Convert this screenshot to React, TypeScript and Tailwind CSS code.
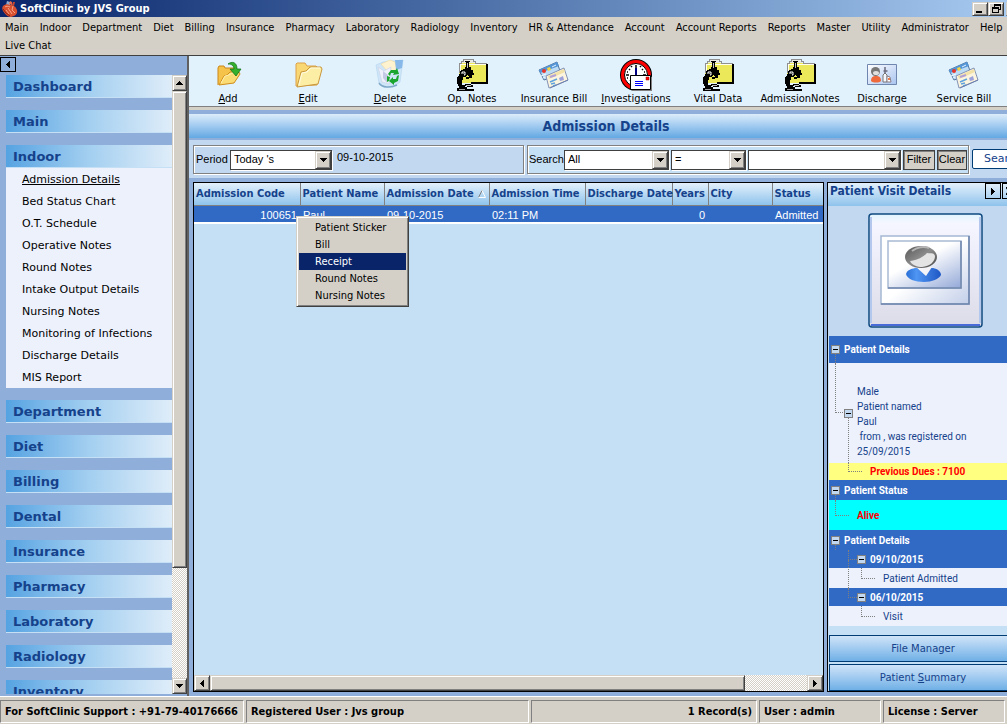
import type { ReactNode } from "react";

const UI = "font-[family-name:'DejaVu_Sans_Condensed','Noto_Sans',sans-serif]";
const WIDE = "font-[family-name:'DejaVu_Sans',Verdana,sans-serif]";
const PLAIN = "font-[family-name:'Liberation_Sans',Arial,sans-serif]";
const NARROW = "font-[family-name:Roboto,'Liberation_Sans',sans-serif]";

const RAISED =
  "bg-[#d4d0c8] border border-t-[#d4d0c8] border-l-[#d4d0c8] border-r-[#404040] border-b-[#404040] shadow-[inset_1px_1px_0_#fff,inset_-1px_-1px_0_#808080]";

const menus = [
  "Main", "Indoor", "Department", "Diet", "Billing", "Insurance", "Pharmacy", "Laboratory", "Radiology",
  "Inventory", "HR & Attendance", "Account", "Account Reports", "Reports", "Master", "Utility",
  "Administrator", "Help", "Live Chat",
];

const indoorLinks = [
  "Admission Details", "Bed Status Chart", "O.T. Schedule", "Operative Notes", "Round Notes",
  "Intake Output Details", "Nursing Notes", "Monitoring of Infections", "Discharge Details", "MIS Report",
];

const sections: { title: string; links?: string[] }[] = [
  { title: "Dashboard" },
  { title: "Main" },
  { title: "Indoor", links: indoorLinks },
  { title: "Department" },
  { title: "Diet" },
  { title: "Billing" },
  { title: "Dental" },
  { title: "Insurance" },
  { title: "Pharmacy" },
  { title: "Laboratory" },
  { title: "Radiology" },
  { title: "Inventory" },
];

function Arrow({ dir }: { dir: "up" | "down" | "left" | "right" }) {
  const d = {
    up: "M0 4h7L3.5 0z",
    down: "M0 0h7L3.5 4z",
    left: "M4 0v7L0 3.5z",
    right: "M0 0v7l4-3.5z",
  }[dir];
  const flat = dir === "up" || dir === "down";
  return (
    <svg width={flat ? 7 : 4} height={flat ? 4 : 7} shapeRendering="crispEdges" aria-hidden="true">
      <path d={d} />
    </svg>
  );
}

function HeartIcon() {
  return (
    <svg width="16" height="16" viewBox="0 0 16 16" aria-hidden="true">
      <path d="M5 0l3 1v3H4z" fill="#8fa8cc" />
      <path d="M7 3l1-3 2 1v3z" fill="#e8694a" />
      <path d="M10 4l1-3h2l-1 4z" fill="#c9452e" />
      <path d="M1 5c2-2 5-2 7-1 4 0 6 2 7 5 1 4-2 6-6 7-3 0-6-3-8-6-1-2-1-4 0-5z" fill="#d8502f" />
      <path d="M3 6c1-1 3-1 5 0M6 7l4 6M11 5l-1 4 3 3M4 9l3 4" stroke="#f6a488" fill="none" />
      <path d="M1 8l3 4 4 3" stroke="#8e1f14" fill="none" />
    </svg>
  );
}

function AddIcon() {
  return (
    <svg width="32" height="32" viewBox="0 0 32 32" className="shrink-0" aria-hidden="true">
      <path d="M6 26V9l1-2h5l1 2h9l1 1v4" fill="#f5c24a" stroke="#c98716" />
      <path d="M7 26l5-9 3-1 3-3h9l1 2-6 9z" fill="#fbdc74" stroke="#cf8d1a" />
      <path d="M9 24l4-7 4-1 3-2h6" fill="none" stroke="#fff0b0" />
      <path d="M16 5c4-3 9-2 9 5h4l-5 7-6-7h4c0-3-2-5-6-5z" fill="#35b02c" stroke="#14741a" strokeWidth=".8" />
    </svg>
  );
}

function EditIcon() {
  return (
    <svg width="32" height="32" viewBox="0 0 32 32" className="shrink-0" aria-hidden="true">
      <path d="M4 27V5l1-1h8l2 3h9l1 1v18z" fill="#f9d873" stroke="#dba04a" />
      <path d="M5 28l4-15 5-1 4-4h11l1 2-4 15z" fill="#fdeea6" stroke="#c9973c" />
      <path d="M7 26l3-12 5-1 4-4h9" fill="none" stroke="#fffbe0" />
    </svg>
  );
}

function DeleteIcon() {
  return (
    <svg width="32" height="32" viewBox="0 0 32 32" className="shrink-0" aria-hidden="true">
      <path d="M2 6l7-3 20-2-3 22-7 5-9 0-5-4z" fill="#cfe6f8" stroke="#b4d4ee" strokeWidth=".6" />
      <path d="M7 5l9-4 5 2 2 7-8 4z" fill="#fff3cf" stroke="#ecd9a0" strokeWidth=".6" />
      <path d="M4 8l6 4 7-4-2 17-7-2z" fill="#eef1fb" stroke="#c8d0e6" strokeWidth=".6" />
      <path d="M9 12l5 4-1 8-4-5z" fill="#c4cae6" />
      <path d="M21 1h8l-1 8-6 2z" fill="#86b9ea" />
      <path d="M5 24c3 5 12 5 18 2" fill="none" stroke="#7fa8c8" strokeWidth="1.500" />
      <path d="M14 15l3-4h5l1-2 2 6-6 1 1-2h-3l-1 3z" fill="#1aa52e" />
      <path d="M25 16l-1 6-4 2v2l-5-4 4-4v2h3l1-3zM13 17l3 1-1 4-2 1z" fill="#1aa52e" />
    </svg>
  );
}

function MicroscopeIcon() {
  return (
    <svg width="32" height="32" viewBox="0 0 32 32" shapeRendering="crispEdges" className="shrink-0" aria-hidden="true">
      <path d="M3 24V4h2l2-3h9l2 3h13v20z" fill="#ebe95a" />
      <path d="M5 4l2-3h9l2 3z" fill="#e8e8e0" />
      <path d="M4 14V5h26" fill="none" stroke="#fffff0" />
      <path d="M3 14V4h2V2h2V0h10v2h2v2h12" fill="none" stroke="#909090" />
      <path d="M15 24h16V5" fill="none" stroke="#000" strokeWidth="2" />
      {/* eyepiece and tube */}
      <path d="M9 2h5v1h-1v5h2v3h2v3h1v2h-2v2h-3l-3-3H7v-5h2V8h1V3H9z" />
      <path d="M11 4h1v5h-1z" fill="#c0c0c0" />
      {/* focus wheel */}
      <path d="M5 11h5v1h1v5h-1v1H5v-1H4v-5h1z" />
      <path d="M6 12h3v1h1v3H9v1H6v-1H5v-3h1z" fill="#808080" />
      <path d="M6 13h1v1H6zM8 13h1v1H8zM6 15h1v1H6zM8 15h1v1H8z" fill="#d0d0d0" />
      {/* arm, stage and base */}
      <path d="M3 15h5v3H7v3H6v5h3v2h2v2h7v2H1v-3h2v-2H2v-2H1v-7h1v-1h1z" />
      <path d="M10 18h3v-1h3v2h-3v1h-3z" />
      <path d="M9 25h6v1h2v2h-6v-1H9z" />
      <path d="M10 26h5v1h-5z" fill="#c0c0c0" />
      <path d="M3 30h6v1H3z" fill="#a0a0a0" />
    </svg>
  );
}

function BillIcon() {
  return (
    <svg width="32" height="32" viewBox="0 0 32 32" className="shrink-0" aria-hidden="true">
      <path d="M1 11L19 3l4 12L6 21z" fill="#bcdcf5" stroke="#53749c" />
      <path d="M1 11L19 3l2 4L2 14z" fill="#5596d6" />
      <circle cx="6" cy="12" r="2" fill="#e5342a" />
      <path d="M9 9l3-1 1 3-3 1z" fill="#f5d443" />
      <path d="M14 8l4-2" stroke="#e8f4ff" />
      <path d="M3 17l5-2M5 19l4-2" stroke="#f5fbff" />
      <path d="M8 17l18-8 4 12-19 8z" fill="#fbf4de" stroke="#8492b4" />
      <path d="M10 17l16-7 1 3-16 7z" fill="#f3e2a8" />
      <path d="M12 18l6-2" stroke="#b0a0d8" strokeWidth="2" />
      <path d="M12 23l7-3M13 25l4-1M15 27l3-1" stroke="#5ea2dd" strokeWidth="1.500" />
      <path d="M21 19l4-2 1 4-4 1z" fill="#9ea2dc" />
      <path d="M12 29l18-8" stroke="#6b7fae" />
    </svg>
  );
}

function ClockIcon() {
  return (
    <svg width="32" height="32" viewBox="0 0 32 32" className="shrink-0" aria-hidden="true">
      <circle cx="16" cy="16" r="16" fill="#000" />
      <circle cx="16" cy="16" r="15" fill="#f00" />
      <circle cx="16" cy="16" r="11.500" fill="#fff" stroke="#000" />
      <path d="M16 6v3M26 16h-3M6 16h3M9 10l1 1M23 10l-1 1M10 22l1-1M11 7l1 1M21 7l-1 1M7 13h1M24 13h1M7 19h1" stroke="#000" strokeWidth="1.500" />
      <path d="M16 9v7" stroke="#000080" strokeWidth="2" />
      <path d="M12 18h20v14H12z" fill="#808080" />
      <path d="M10.500 16.500h20v14h-20z" fill="#fff" stroke="#000" />
      <path d="M26 18h3v3h-3z" fill="#f00" stroke="#900" strokeWidth=".5" />
      <path d="M15 22.500h8M15 24.500h8M15 26.500h8" stroke="#00f" />
    </svg>
  );
}

function DischargeIcon() {
  return (
    <svg width="32" height="32" viewBox="0 0 32 32" className="shrink-0" aria-hidden="true">
      <defs>
        <linearGradient id="card" x1="0" y1="0" x2="1" y2="1">
          <stop offset="0" stopColor="#fff" />
          <stop offset="1" stopColor="#a9c4f0" />
        </linearGradient>
      </defs>
      <path d="M1.500 5.500h29v20h-29z" fill="url(#card)" stroke="#6f87ae" />
      <path d="M5 22c0-4 2-5 5-5s5 1 5 5c-2 2-8 2-10 0z" fill="#ee6a3c" />
      <circle cx="9.500" cy="12.500" r="4.500" fill="#777" />
      <ellipse cx="10" cy="14" rx="3" ry="2" fill="#e0e0e0" />
      <path d="M19 8v6M17.500 12h4" stroke="#6b6b7d" strokeWidth="1.500" />
      <path d="M17 23v-7l2-2 2 2v7z" fill="#f8f8ff" stroke="#777" />
      <path d="M21 23v-6l3 1 1 5z" fill="#fff" stroke="#8a7f86" />
      <path d="M22 19h2v2h-2z" fill="#ee7b4a" />
    </svg>
  );
}

function PatientPhoto() {
  return (
    <svg width="115" height="115" viewBox="0 0 115 115" role="img" aria-label="Patient photo">
      <defs>
        <linearGradient id="frame" x1="0" y1="0" x2="0" y2="1">
          <stop offset="0" stopColor="#e0f4fe" />
          <stop offset=".08" stopColor="#f5f6ff" />
          <stop offset=".45" stopColor="#ebebf8" />
          <stop offset="1" stopColor="#dcdce8" />
        </linearGradient>
        <linearGradient id="mat" x1="0" y1="0" x2="1" y2="1">
          <stop offset=".5" stopColor="#fff" />
          <stop offset="1" stopColor="#c3cfe9" />
        </linearGradient>
        <linearGradient id="inner" x1=".2" y1="0" x2="1" y2="1">
          <stop offset=".35" stopColor="#fff" />
          <stop offset="1" stopColor="#94a9d8" />
        </linearGradient>
        <linearGradient id="hair" x1="0" y1="0" x2="1" y2="1">
          <stop offset="0" stopColor="#555" />
          <stop offset=".5" stopColor="#8c8c8c" />
          <stop offset="1" stopColor="#444" />
        </linearGradient>
        <linearGradient id="shirt" x1="0" y1="0" x2="1" y2="0">
          <stop offset="0" stopColor="#2a6fd6" />
          <stop offset=".3" stopColor="#4f95f2" />
          <stop offset="1" stopColor="#1e57c4" />
        </linearGradient>
      </defs>
      <rect x="1" y="1" width="113" height="113" rx="3" fill="url(#frame)" stroke="#0f4a80" strokeWidth="1.500" />
      <path d="M3 4v106M112 4v106" stroke="#b4c8ee" strokeWidth="2" />
      <path d="M3 112h109" stroke="#4a6ad8" strokeWidth="2" />
      <rect x="13" y="23" width="88" height="68" fill="url(#mat)" stroke="#a5b8d3" strokeWidth="1.500" />
      <path d="M13 91h88V23" fill="none" stroke="#6b82ab" strokeWidth="1.500" />
      <rect x="20" y="28" width="73" height="47" fill="url(#inner)" stroke="#a9bbd4" strokeWidth="1.500" />
      <path d="M20 75h73V28" fill="none" stroke="#6f86ad" strokeWidth="1.500" />
      <path d="M38 61c1-4 5-5 9-6h18c5 1 8 4 8 7-2 4-9 7-17 7-9 0-17-3-18-8z" fill="url(#shirt)" />
      <path d="M48 54l10 9 6-9z" fill="#f4f4f8" />
      <ellipse cx="53" cy="44" rx="16" ry="11" fill="url(#hair)" />
      <path d="M42 48c6-1 11-2 17-8 3 1 7-1 8 3 0 6-5 10-13 11-5 0-10-2-12-6z" fill="#e4e4e4" />
      <path d="M44 38c5-4 12-5 17-3" fill="none" stroke="#b4b4b4" strokeWidth="2" />
    </svg>
  );
}

const tools: { label: ReactNode; icon: ReactNode }[] = [
  { label: <><u>A</u>dd</>, icon: <AddIcon /> },
  { label: <><u>E</u>dit</>, icon: <EditIcon /> },
  { label: <><u>D</u>elete</>, icon: <DeleteIcon /> },
  { label: "Op. Notes", icon: <MicroscopeIcon /> },
  { label: "Insurance Bill", icon: <BillIcon /> },
  { label: <><u>I</u>nvestigations</>, icon: <ClockIcon /> },
  { label: "Vital Data", icon: <MicroscopeIcon /> },
  { label: "AdmissionNotes", icon: <MicroscopeIcon /> },
  { label: "Discharge", icon: <DischargeIcon /> },
  { label: "Service Bill", icon: <BillIcon /> },
];

function Sidebar() {
  return (
    <aside className="flex w-[189px] shrink-0 flex-col border-r-2 border-[#606060] bg-[#8fafda]">
      <button aria-label="Collapse" className="mt-px flex h-[15px] w-4 shrink-0 items-center justify-center border border-black">
        <Arrow dir="left" />
      </button>
      <div className="mt-[3px] mb-[2px] flex min-h-0 flex-1">
        <nav className={`${WIDE} flex flex-1 flex-col gap-3 overflow-hidden pl-[6px]`}>
          {sections.map((s) => (
            <section key={s.title} className="shrink-0">
              <h2 className="h-[23px] border-b border-[#c5dff5] bg-linear-to-r from-[#55a3e2] via-[#a3cff0] to-[#dfedf9] pl-[7px] text-[13px] leading-[23px] font-bold text-[#15428b]">
                {s.title}
              </h2>
              {s.links && (
                <ul className="bg-[#edf1fc]">
                  {s.links.map((link, i) => (
                    <li key={link} className="h-[22px] pl-4 text-[11px] leading-6 whitespace-nowrap">
                      <a href="#" className={i === 0 ? "underline" : ""}>{link}</a>
                    </li>
                  ))}
                </ul>
              )}
            </section>
          ))}
        </nav>
        <div className="flex w-[15px] shrink-0 flex-col bg-[repeating-conic-gradient(#fff_0_25%,#d4d0c8_0_50%)] bg-size-[2px_2px]">
          <button aria-label="Scroll up" className={`${RAISED} flex h-4 items-center justify-center`}><Arrow dir="up" /></button>
          <div className={`${RAISED} h-[477px]`} />
          <button aria-label="Scroll down" className={`${RAISED} mt-auto flex h-4 items-center justify-center`}><Arrow dir="down" /></button>
        </div>
      </div>
    </aside>
  );
}

function Combo({ label, value, className }: { label: string; value: string; className: string }) {
  return (
    <div className={`relative h-5 border border-[#404040] bg-white shadow-[1px_1px_0_#fff] ${className}`}>
      <select aria-label={label} className="h-full w-full appearance-none pl-[3px] outline-none">
        <option>{value}</option>
      </select>
      <span className={`${RAISED} pointer-events-none absolute top-0 right-0 flex h-[18px] w-4 items-center justify-center`}>
        <Arrow dir="down" />
      </span>
    </div>
  );
}

const GROUP = "border border-[#808080] shadow-[1px_1px_0_#fff,inset_1px_1px_0_#fff]";

function FilterBar() {
  return (
    <div className={`${PLAIN} flex h-[38px] items-start gap-[3px] overflow-hidden bg-[#c2d8f0] pt-[5px] pl-1 text-[11px]`}>
      <div className={`${GROUP} flex h-[29px] w-[331px] shrink-0 items-center pl-[2px]`}>
        <span className="w-[34px]">Period</span>
        <Combo label="Period" value="Today 's" className="w-[102px]" />
        <span className="ml-[5px] pb-1">09-10-2015</span>
      </div>
      <div className={`${GROUP} flex h-[29px] w-[442px] shrink-0 items-center gap-[2px] bg-[#c5dff5]`}>
        <span className="w-[34px] pl-px">Search</span>
        <Combo label="Search field" value="All" className="w-[105px]" />
        <Combo label="Operator" value="=" className="w-[75px]" />
        <Combo label="Search value" value="" className="w-[153px]" />
        <button className="h-5 w-8 border border-[#404040] bg-[#d4d0c8] shadow-[inset_1px_1px_0_#808080]">Filter</button>
        <button className="h-5 w-[30px] border border-[#404040] bg-[#d4d0c8] shadow-[inset_1px_1px_0_#808080]">Clear</button>
      </div>
      <button className={`${WIDE} mt-1 h-5 w-[62px] shrink-0 rounded-[2px] border border-[#003c74] bg-white text-[#15428b]`}>Search</button>
    </div>
  );
}

const columns = [
  { title: "Admission Code", value: "100651", head: "w-[106px]", cell: "text-right" },
  { title: "Patient Name", value: "Paul", head: "w-[84px]", cell: "" },
  { title: "Admission Date", value: "09-10-2015", head: "w-[105px]", cell: "" },
  { title: "Admission Time", value: "02:11 PM", head: "w-[96px]", cell: "" },
  { title: "Discharge Date", value: "", head: "w-[87px]", cell: "" },
  { title: "Years", value: "0", head: "w-[36px]", cell: "text-right" },
  { title: "City", value: "", head: "w-[64px]", cell: "" },
  { title: "Status", value: "Admitted", head: "", cell: "" },
];

const contextItems = ["Patient Sticker", "Bill", "Receipt", "Round Notes", "Nursing Notes"];

function AdmissionGrid() {
  return (
    <div className="relative flex min-w-0 flex-1 flex-col border border-black bg-[#c5dff5]">
      <table className="w-full table-fixed border-collapse text-[11px] whitespace-nowrap">
        <thead className={`${UI} text-left text-[#15428b]`}>
          <tr className="h-[22px] bg-linear-to-b from-[#e3f0fb] to-[#8fc3ec]">
            {columns.map((c) => (
              <th key={c.title} className={`${c.head} border-r border-b border-[#808080] p-0 pl-[2px] font-bold last:border-r-0`}>
                {c.title}
                {c.title === "Admission Date" && (
                  <svg width="8" height="8" viewBox="0 0 8 8" className="ml-1 inline" aria-hidden="true">
                    <path d="M4 .5L.5 7.500" stroke="#808080" />
                    <path d="M4 .5l3.500 7h-7" fill="none" stroke="#fff" />
                  </svg>
                )}
              </th>
            ))}
          </tr>
        </thead>
        <tbody className={`${PLAIN} text-white`}>
          <tr className="h-[18px] border-b-2 border-white bg-[#316ac5]">
            {columns.map((c) => (
              <td key={c.title} className={`px-[3px] pt-[2px] pb-0 leading-[14px] ${c.cell}`}>{c.value}</td>
            ))}
          </tr>
        </tbody>
      </table>

      <div role="menu" className={`${UI} ${RAISED} absolute top-[33px] left-[102px] w-[113px] p-[2px] text-[11px]`}>
        {contextItems.map((item) => (
          <button
            key={item}
            role="menuitem"
            className={`block h-[17px] w-full pl-4 text-left leading-[17px] ${item === "Receipt" ? "bg-[#0a246a] text-white" : ""}`}
          >
            {item}
          </button>
        ))}
      </div>

      <div className="mt-auto flex h-4 bg-[repeating-conic-gradient(#fff_0_25%,#d4d0c8_0_50%)] bg-size-[2px_2px]">
        <button aria-label="Scroll left" className={`${RAISED} flex w-4 items-center justify-center`}><Arrow dir="left" /></button>
        <div className={`${RAISED} w-[85%]`} />
        <button aria-label="Scroll right" className={`${RAISED} ml-auto flex w-4 items-center justify-center`}><Arrow dir="right" /></button>
      </div>
    </div>
  );
}

function Toggle({ className }: { className: string }) {
  return (
    <button
      aria-label="Collapse"
      className={`z-10 flex size-[9px] shrink-0 items-center justify-center border border-[#808080] bg-[#c2d8f0] ${className}`}
    >
      <span className="h-px w-[5px] bg-black" />
    </button>
  );
}

const LINE = "absolute border-dotted border-[#808080]";
const DARK = "relative flex items-center bg-[#316ac5] font-bold text-white";
const LIGHT = "relative flex items-center bg-[#edf1fc] text-[#15428b]";

function VisitTree() {
  return (
    <div className={`${NARROW} ml-px text-[10px] leading-[15px]`}>
      <div className={`${DARK} h-[27px]`}>
        <Toggle className="ml-[2px]" />
        <span className="ml-1">Patient Details</span>
        <i className={`${LINE} top-[18px] bottom-0 left-[6px] border-l`} />
      </div>
      <div className={`${LIGHT} h-[100px]`}>
        <i className={`${LINE} top-0 left-[6px] h-[50px] w-[10px] border-b border-l`} />
        <i className={`${LINE} top-[50px] bottom-0 left-[19px] border-l`} />
        <Toggle className="ml-[15px]" />
        <p className="ml-1 pt-[17px]">
          Male<br />Patient named<br />Paul<br />&nbsp;from , was registered on<br />25/09/2015
        </p>
      </div>
      <div className="relative flex h-[17px] items-center bg-[#ffff80] pl-[41px] font-bold text-[#f00]">
        <i className={`${LINE} top-0 left-[19px] h-[9px] w-[14px] border-b border-l`} />
        Previous Dues : 7100
      </div>
      <div className={`${DARK} h-5`}>
        <Toggle className="ml-[2px]" />
        <span className="ml-1">Patient Status</span>
        <i className={`${LINE} top-[15px] bottom-0 left-[6px] border-l`} />
      </div>
      <div className="relative flex h-[30px] items-center bg-[#0ff] pl-7 font-bold text-[#f00]">
        <i className={`${LINE} top-0 left-[6px] h-4 w-[14px] border-b border-l`} />
        Alive
      </div>
      <div className={`${DARK} h-5`}>
        <Toggle className="ml-[2px]" />
        <span className="ml-1">Patient Details</span>
        <i className={`${LINE} top-[15px] bottom-0 left-[6px] border-l`} />
      </div>
      {[["09/10/2015", "Patient Admitted"], ["06/10/2015", "Visit"]].map(([date, note], i) => (
        <div key={date} className="relative">
          <i className={`${LINE} z-10 top-0 left-[19px] h-[10px] w-[9px] border-b border-l`} />
          {i === 0 && <i className={`${LINE} z-10 top-[10px] bottom-0 left-[19px] border-l`} />}
          <div className={`${DARK} h-[18px]`}>
            <Toggle className="ml-7" />
            <span className="ml-1">{date}</span>
          </div>
          <div className={`${LIGHT} h-5 pl-[54px]`}>
            <i className={`${LINE} top-0 left-8 h-[11px] w-[14px] border-b border-l`} />
            {note}
          </div>
        </div>
      ))}
    </div>
  );
}

const WIDE_BTN = "block h-[27px] w-full border border-[#003c74] bg-linear-to-b from-[#cfe4f8] to-[#6fb0e6] text-[#15428b]";

function VisitPanel() {
  return (
    <div className="w-[180px] shrink-0 overflow-hidden border border-r-0 border-black bg-[#c5dff5]">
      {/* content is wider than the pane and runs out past its right edge */}
      <div className="flex h-full w-[195px] flex-col">
        <div className={`${UI} flex h-[23px] shrink-0 items-start bg-linear-to-b from-[#e3f0fb] to-[#8fc3ec] pl-[2px] text-[#15428b]`}>
          <h2 className="w-[155px] text-[12px] leading-[17px] font-bold">Patient Visit Details</h2>
          <button aria-label="Next" className="flex size-4 items-center justify-center border border-black text-black"><Arrow dir="right" /></button>
          <button aria-label="Close" className="ml-px flex size-4 items-center justify-center border border-black text-black">
            <svg width="8" height="8" aria-hidden="true"><path d="M0 0l8 8M8 0L0 8" stroke="#000" strokeWidth="2" /></svg>
          </button>
        </div>
        <div className="flex h-[130px] shrink-0 justify-center bg-[#c2d8f0] pt-[7px]"><PatientPhoto /></div>
        <VisitTree />
        <div className={`${WIDE} mt-auto ml-px flex w-[188px] flex-col gap-[2px] text-[10px]`}>
          <button className={WIDE_BTN}>File Manager</button>
          <button className={WIDE_BTN}>Patient <u>S</u>ummary</button>
        </div>
      </div>
    </div>
  );
}

const STATUS = "h-[23px] shrink-0 border border-t-[#808080] border-l-[#808080] border-r-white border-b-white px-1 leading-[22px]";

export default function App() {
  return (
    <div className={`${UI} flex h-screen flex-col overflow-hidden bg-[#d4d0c8] text-[11px] text-black`}>
      <header className="flex h-[17px] shrink-0 items-center bg-linear-to-r from-[#0a246a] to-[#a6caf0] pl-[2px]">
        <HeartIcon />
        <h1 className="ml-[2px] text-[11px] leading-4 font-bold text-white">SoftClinic by JVS Group</h1>
        <div className="ml-auto flex w-[35px] overflow-hidden">
          <button aria-label="Minimize" className={`${RAISED} flex h-[14px] w-4 shrink-0 items-end pb-[2px] pl-[3px]`}>
            <span className="h-[2px] w-[6px] bg-black" />
          </button>
          <button aria-label="Restore" className={`${RAISED} flex h-[14px] w-4 shrink-0 items-center justify-center`}>
            <svg width="9" height="9" shapeRendering="crispEdges" aria-hidden="true">
              <path d="M2 0h7v6H7v3H0V3h2zM3 2v1h4v2h1V2zM1 5v3h5V5z" fillRule="evenodd" />
            </svg>
          </button>
          <button aria-label="Close window" className={`${RAISED} ml-[2px] h-[14px] w-4 shrink-0`} />
        </div>
      </header>

      <nav className="flex shrink-0 flex-wrap gap-x-[11px] pt-[2px] pl-[5px]">
        {menus.map((m) => (
          <button key={m} className="h-[18px] leading-[18px] whitespace-nowrap">{m}</button>
        ))}
      </nav>

      <div className="flex min-h-0 flex-1 border-t border-[#404040]">
        <Sidebar />
        <main className="flex min-w-0 flex-1 flex-col bg-[#8fafda]">
          <div className="flex h-[51px] shrink-0 overflow-hidden border-b border-[#808080] bg-[#e1f2fd] pt-[3px]">
            {tools.map((t, i) => (
              <button key={i} className="flex w-[82px] shrink-0 flex-col items-center justify-start first:w-[78px]">
                {t.icon}
                <span className="leading-4 whitespace-nowrap">{t.label}</span>
              </button>
            ))}
          </div>
          <div className="h-[3px] shrink-0 bg-[#d4d0c8]" />
          <h2 className="mt-1 mb-[2px] h-6 shrink-0 bg-linear-to-b from-[#dcecfa] to-[#62a8e3] pl-4 text-center text-[14px] leading-6 font-bold text-[#15428b]">
            Admission Details
          </h2>
          <FilterBar />
          <div className="flex min-h-0 flex-1 gap-[3px] pt-1 pb-1 pl-1">
            <AdmissionGrid />
            <VisitPanel />
          </div>
        </main>
      </div>

      <footer className="flex h-7 shrink-0 gap-[2px] border-t border-white pt-[3px] font-bold">
        <div className={`${STATUS} w-[244px]`}>For SoftClinic Support : +91-79-40176666</div>
        <div className={`${STATUS} w-[283px]`}>Registered User : Jvs group</div>
        <div className={`${STATUS} w-[226px] text-right`}>1 Record(s)</div>
        <div className={`${STATUS} w-[122px]`}>User : admin</div>
        <div className={`${STATUS} mr-[2px] flex-1`}>License : Server</div>
      </footer>
    </div>
  );
}
